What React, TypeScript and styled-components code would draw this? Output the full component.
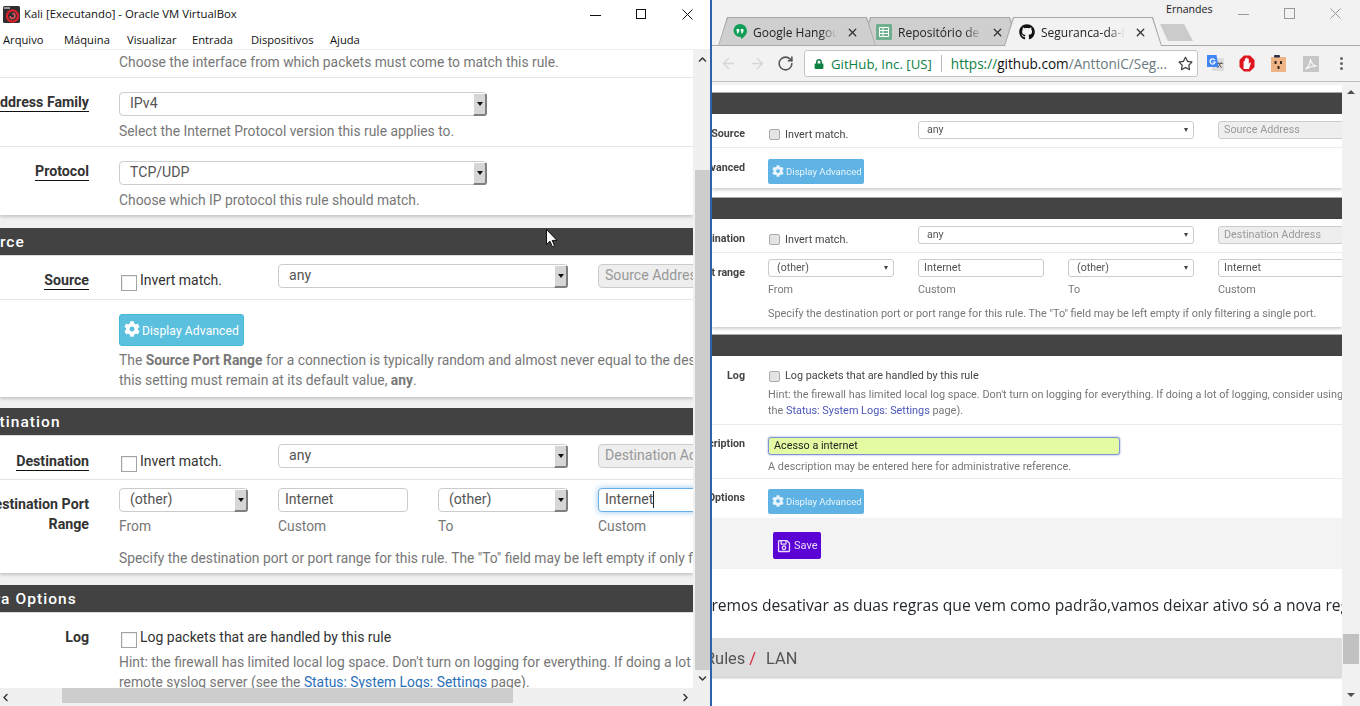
import React from 'react';
import styled, { createGlobalStyle } from 'styled-components';
import { FaCog, FaGithub, FaLock, FaRegSave, FaRegStar, FaChevronUp, FaChevronDown, FaChevronLeft, FaChevronRight } from 'react-icons/fa';
import { ArrowLeft, ArrowRight, RotateCw, X } from 'lucide-react';

const Global = createGlobalStyle`
  html, body { margin: 0; padding: 0; width: 1360px; height: 706px; overflow: hidden; background: #fff; }
  #root { width: 1360px; height: 706px; }
  * { box-sizing: border-box; }
`;

const Desktop = styled.div`
  display: flex; width: 1360px; height: 706px; overflow: hidden; position: relative;
  font-family: Roboto, "Liberation Sans", sans-serif;
`;
const Pointer = styled.svg`position: absolute; left: 546px; top: 229px; z-index: 9;`;

/* ---------- VirtualBox window ---------- */
const VBox = styled.div`
  width: 712px; height: 706px; display: flex; flex-direction: column;
  background: #f0f0f0; border-right: 2px solid #2b63ad; flex: none;
`;
const TitleBar = styled.div`
  height: 28px; flex: none; background: #fff; display: flex; align-items: center; padding-left: 3px;
  font: 11.35px "Open Sans", "Noto Sans", sans-serif; color: #111;
`;
const TitleText = styled.span`margin: 0 0 1px 4px; flex: 1; white-space: nowrap;`;
const WinControls = styled.div`display: flex; align-items: center; color: ${p => p.$color}; height: 100%;`;
const WinBtn = styled.div`
  width: ${p => p.$w}px; display: flex; justify-content: center; align-items: center;
`;
const MenuBar = styled.div`
  height: 22px; flex: none; background: #fff; display: flex; align-items: center; padding: 2px 0 0 3px;
  border-bottom: 1px solid #eee;
  font: 11.2px "Open Sans", "Noto Sans", sans-serif; color: #111;
`;
const MenuItem = styled.span`width: ${p => p.$w}px; flex: none; white-space: nowrap;`;
const VBody = styled.div`
  flex: 1; min-height: 0; display: grid; grid-template-columns: 693px 17px; grid-template-rows: 638px 18px;
`;
const Viewport = styled.div`overflow: hidden; background: #f0f0f0;`;

const Panel = styled.section`
  background: #fff; box-shadow: 0 2px 3px rgba(0,0,0,.18);
`;
const Bar = styled.h2`
  margin: ${p => p.$gap}px 0 0; height: 28px; background: #424242; border-bottom: 1px solid #ddd; color: #fff;
  font: 500 15.5px/28px Roboto, sans-serif; letter-spacing: 1.05px; white-space: nowrap;
  overflow: hidden; text-indent: ${p => p.$indent}px;
`;
const Row = styled.div`
  display: grid; grid-template-columns: 89px 1fr; column-gap: 30px;
  padding: ${p => p.$pt}px 0 ${p => p.$pb}px;
  border-bottom: ${p => (p.$noBorder ? '0' : '1px solid #e4e4e4')};
`;
const Label = styled.div`
  display: flex; justify-content: flex-end; text-align: right; white-space: nowrap;
  font-weight: 700; font-size: 14.2px; line-height: 20px; color: #333;
  margin-top: ${p => p.$mt || 0}px; margin-bottom: ${p => (p.$mt ? -12 : 0)}px;
`;
const Under = styled.span`border-bottom: 1px solid #111; height: 20px;`;
const Cell = styled.div`min-width: 0;`;
const Hint = styled.div`
  font-size: 13.85px; line-height: 20px; color: #777; white-space: nowrap; margin-top: ${p => p.$mt || 0}px;
  a { color: #2a70b8; }
`;
const Fields = styled.div`
  display: grid; grid-template-columns: 129px 130px 130px 140px; column-gap: 30px;
`;
const Select = styled.div`
  height: 24px; width: ${p => (p.$w ? `${p.$w}px` : 'auto')}; grid-column: span ${p => p.$span || 1};
  border: 1px solid #ccc; border-radius: 4px; background: #fff; position: relative;
  padding-left: 10px; font-size: 14.1px; line-height: 21.5px; color: #555;
`;
const SelectArrow = styled.span`
  position: absolute; right: -1px; top: 0; bottom: -1px; width: 14px;
  background: #d6d6d6; border: 1px solid #fff; border-right: 2px solid #808080; border-bottom: 2px solid #808080;
  border-radius: 0 3px 3px 0; display: flex; align-items: center; justify-content: center;
  &::after { content: ""; border: 3.5px solid transparent; border-top: 4px solid #111; border-bottom: 0; }
`;
const Input = styled.div`
  height: 24px; border: 1px solid ${p => (p.$focus ? '#66afe9' : '#ccc')}; border-radius: 4px;
  background: ${p => (p.$off ? '#eee' : '#fff')}; color: ${p => (p.$off ? '#999' : '#555')};
  padding-left: 6px; font-size: 14.1px; line-height: 21px; white-space: nowrap; overflow: hidden;
  box-shadow: ${p => (p.$focus ? '0 0 6px rgba(102,175,233,.7)' : 'none')};
`;
const Caret = styled.span`display: inline-block; width: 1px; height: 17px; background: #222; vertical-align: -4px;`;
const Check = styled.label`
  display: flex; align-items: flex-start; font-size: 14px; line-height: 20px; color: #333; white-space: nowrap;
  padding-left: 2px; margin-top: ${p => p.$mt || 0}px; margin-bottom: ${p => (p.$mt ? -12 : 0)}px;
  &::before {
    content: ""; width: 14px; height: 14px; margin: 5px 3px 0 0; flex: none; background: #fff;
    border: 1px solid #a4a4a4; box-shadow: inset 1px 1px 0 #ececec;
  }
`;
const InfoBtn = styled.button`
  display: flex; align-items: center; width: 125px; height: 32px; padding: 1px 0 0 4px; margin: 0;
  background: #5bc0de; border: 1px solid #46b8da; border-radius: 3px; color: #fff;
  font: 12.1px Roboto, sans-serif; letter-spacing: .1px; white-space: nowrap;
  svg { margin-right: 2px; margin-top: -4px; }
`;
const Sub = styled.div`font-size: 13.85px; line-height: 20px; color: #777; margin-top: 4px;`;
const VScroll = styled.div`
  background: #f0f0f0; display: flex; flex-direction: column; align-items: center; padding-left: 1px; padding-top: 5px; color: #333;
`;
const VThumb = styled.div`width: 15px; height: 500px; margin-top: 106px; background: #cdcdcd; flex: none;`;
const VDown = styled.div`margin-top: 4px; display: flex;`;
const HScroll = styled.div`
  grid-column: 1 / 3; background: #f0f0f0; display: flex; align-items: center; color: #333; padding-left: 1px; height: 18px;
`;
const HThumb = styled.div`width: 451px; height: 15px; margin: 0 168px 3px 52px; background: #cdcdcd;`;

const Select1 = ({ children, w, span }: any) => (
  <Select $w={w} $span={span}>{children}<SelectArrow /></Select>
);

const VBoxLogo = () => (
  <svg width="17" height="17" viewBox="0 0 17 17">
    <rect width="17" height="17" rx="1.5" fill="#2f2f33" />
    <circle cx="9.5" cy="10" r="5.6" fill="none" stroke="#d8232a" strokeWidth="2.4" />
    <path d="M9.5 7.6a2.4 2.4 0 1 1-2.4 2.4" fill="none" stroke="#e85a5f" strokeWidth="1.5" />
    <rect x="1" y="1" width="6" height="2" fill="#9a9a9a" />
  </svg>
);

const LeftWindow = () => (
  <VBox>
    <TitleBar>
      <VBoxLogo />
      <TitleText>Kali [Executando] - Oracle VM VirtualBox</TitleText>
      <WinControls $color="#111">
        <WinBtn $w={46}><svg width="11" height="11"><path d="M0 6.5h11" stroke="currentColor" /></svg></WinBtn>
        <WinBtn $w={46}><svg width="11" height="11"><rect x=".5" y=".5" width="9" height="9" fill="none" stroke="currentColor" /></svg></WinBtn>
        <WinBtn $w={46}><svg width="11" height="11"><path d="M.5.5l10 10M10.5.5l-10 10" stroke="currentColor" /></svg></WinBtn>
      </WinControls>
    </TitleBar>
    <MenuBar>
      <MenuItem $w={61}>Arquivo</MenuItem>
      <MenuItem $w={63}>Máquina</MenuItem>
      <MenuItem $w={65}>Visualizar</MenuItem>
      <MenuItem $w={59}>Entrada</MenuItem>
      <MenuItem $w={79}>Dispositivos</MenuItem>
      <MenuItem $w={40}>Ajuda</MenuItem>
    </MenuBar>
    <VBody>
      <Viewport>
        <Panel>
          <Row $pt={2} $pb={5}>
            <span />
            <Hint>Choose the interface from which packets must come to match this rule.</Hint>
          </Row>
          <Row $pt={14} $pb={5}>
            <Label><Under>Address Family</Under></Label>
            <Cell>
              <Select1 w={368}>IPv4</Select1>
              <Hint $mt={5}>Select the Internet Protocol version this rule applies to.</Hint>
            </Cell>
          </Row>
          <Row $pt={14} $pb={5} $noBorder>
            <Label><Under>Protocol</Under></Label>
            <Cell>
              <Select1 w={368}>TCP/UDP</Select1>
              <Hint $mt={5}>Choose which IP protocol this rule should match.</Hint>
            </Cell>
          </Row>
        </Panel>
        <Bar $gap={13} $indent={-30}>Source</Bar>
        <Panel>
          <Row $pt={8} $pb={11}>
            <Label $mt={6}><Under>Source</Under></Label>
            <Fields>
              <Check $mt={6}>Invert match.</Check>
              <Select1 span={2}>any</Select1>
              <Input $off>Source Address</Input>
            </Fields>
          </Row>
          <Row $pt={14} $pb={7} $noBorder>
            <span />
            <Cell>
              <InfoBtn><FaCog size={16} />Display Advanced</InfoBtn>
              <Hint $mt={4}>The <b>Source Port Range</b> for a connection is typically random and almost never equal to the destination port.</Hint>
              <Hint>this setting must remain at its default value, <b>any</b>.</Hint>
            </Cell>
          </Row>
        </Panel>
        <Bar $gap={11} $indent={-30}>Destination</Bar>
        <Panel>
          <Row $pt={8} $pb={11}>
            <Label $mt={7}><Under>Destination</Under></Label>
            <Fields>
              <Check $mt={7}>Invert match.</Check>
              <Select1 span={2}>any</Select1>
              <Input $off>Destination Address</Input>
            </Fields>
          </Row>
          <Row $pt={8} $pb={5} $noBorder>
            <Label $mt={6}>Destination Port<br />Range</Label>
            <Cell>
              <Fields>
                <div><Select1>(other)</Select1><Sub>From</Sub></div>
                <div><Input>Internet</Input><Sub>Custom</Sub></div>
                <div><Select1>(other)</Select1><Sub>To</Sub></div>
                <div><Input $focus>Internet<Caret /></Input><Sub>Custom</Sub></div>
              </Fields>
              <Hint $mt={12}>Specify the destination port or port range for this rule. The "To" field may be left empty if only filtering a single port.</Hint>
            </Cell>
          </Row>
        </Panel>
        <Bar $gap={12} $indent={-30}>Extra Options</Bar>
        <Panel>
          <Row $pt={14} $pb={5} $noBorder>
            <Label>Log</Label>
            <Cell>
              <Check>Log packets that are handled by this rule</Check>
              <Hint $mt={4}>Hint: the firewall has limited local log space. Don't turn on logging for everything. If doing a lot of logging, consider using a</Hint>
              <Hint>remote syslog server (see the <a>Status: System Logs: Settings</a> page).</Hint>
            </Cell>
          </Row>
        </Panel>
      </Viewport>
      <VScroll>
        <FaChevronUp size={9} />
        <VThumb />
        <VDown><FaChevronDown size={9} /></VDown>
      </VScroll>
      <HScroll>
        <FaChevronLeft size={9} />
        <HThumb />
        <FaChevronRight size={9} />
      </HScroll>
    </VBody>
  </VBox>
);

/* ---------- Chrome window ---------- */
const Chrome = styled.div`
  flex: 1; min-width: 0; height: 706px; display: flex; flex-direction: column; background: #f2f2f2; position: relative;
`;
const TabStrip = styled.div`
  height: 46px; flex: none; display: flex; align-items: flex-end; padding-left: 6px; border-bottom: 1px solid #a9a9a9; 
`;
const Tab = styled.div`
  position: relative; width: 158px; height: 29px; margin-left: ${p => (p.$first ? 0 : -15)}px; margin-bottom: -1px;
  z-index: ${p => p.$z}; display: flex; align-items: center; padding: 1px 0 0 15px; color: #222;
  background: #a9a9a9;
  clip-path: polygon(0 100%, 9px 0, calc(100% - 9px) 0, 100% 100%);
  font: 12px "Open Sans", "Noto Sans", sans-serif;
  &::before {
    content: ""; position: absolute; inset: 1px 1px ${p => (p.$active ? 0 : 1)}px 1px;
    background: ${p => (p.$active ? '#f2f2f2' : '#cfcfcf')};
    clip-path: polygon(0 100%, 9px 0, calc(100% - 9px) 0, 100% 100%);
  }
  & > * { position: relative; }
`;
const TabTitle = styled.span`
  width: 84px; margin-left: 6px; overflow: hidden; white-space: nowrap; flex: none;
  -webkit-mask-image: linear-gradient(to right, #000 80%, transparent);
  mask-image: linear-gradient(to right, #000 80%, transparent);
`;
const TabClose = styled.span`display: flex; margin-left: 9px; color: #333;`;
const NewTab = styled.div`
  width: 33px; height: 17px; margin: 0 0 4px -2px; background: #cbcbcb;
  clip-path: polygon(0 0, 24px 0, 100% 100%, 8px 100%);
`;
const UserName = styled.div`
  position: absolute; left: 454px; top: 1px; font: 10.6px/16px "Open Sans", "Noto Sans", sans-serif; color: #222;
  text-shadow: 0 0 2px #fff, 0 0 3px #fff, 0 0 3px #bbb;
`;
const ChromeControls = styled.div`
  margin-left: auto; align-self: flex-start; display: flex; height: 27px; color: #999; margin-right: 2px;
`;
const Toolbar = styled.div`
  height: 36px; flex: none; display: flex; align-items: center; padding-left: 8px; border-bottom: 1px solid #bdbdbd;
`;
const NavIcon = styled.span`width: ${p => p.$w}px; display: flex; color: ${p => p.$c}; flex: none;`;
const Omnibox = styled.div`
  width: 394px; height: 27px; background: #fff; border: 1px solid #c4c4c4; border-radius: 3px; flex: none;
  display: flex; align-items: center; padding-left: 9px; white-space: nowrap;
  font: 13.2px "Open Sans", "Noto Sans", sans-serif; color: #0b8043;
`;
const Sep = styled.span`width: 1px; height: 17px; background: #bbb; margin: 0 9px;`;
const Url = styled.span`font-size: 13.6px;`;
const UrlScheme = styled.span`color: #0b8043;`;
const UrlHost = styled.span`color: #111;`;
const UrlPath = styled.span`color: #6a7a80;`;
const Ext = styled.span`display: flex; width: 32px; justify-content: flex-start; flex: none;`;
const Dots = styled.span`
  display: flex; flex-direction: column; gap: 2px; margin-left: 5px;
  i { width: 3px; height: 3px; border-radius: 50%; background: #666; display: block; }
`;
const PageWrap = styled.div`
  flex: 1; min-height: 0; display: grid; grid-template-columns: 630px 18px; margin-top: 3px;
`;
const RPage = styled.div`
  overflow: hidden; background: #fff; filter: blur(.35px); min-height: 0; padding-top: 7px;
`;
const RPanel = styled.section`
  background: #fff; box-shadow: 0 2px 3px rgba(0,0,0,.2);
`;
const RBar = styled.div`
  height: ${p => p.$h}px; margin-top: ${p => p.$gap}px; background: #444; border-top: 1px solid #aaa; 
`;
const RRow = styled.div`
  display: grid; grid-template-columns: 33px 1fr; column-gap: 23px;
  padding: ${p => p.$pt}px 0 ${p => p.$pb}px;
  border-bottom: ${p => (p.$noBorder ? '0' : '1px solid #ebebeb')};
`;
const RLabel = styled.div`
  display: flex; justify-content: flex-end; white-space: nowrap; font-weight: 700; font-size: 10.7px; line-height: 14px;
  color: #444; margin-top: ${p => p.$mt || 0}px; margin-bottom: -10px;
`;
const RFields = styled.div`
  display: grid; grid-template-columns: repeat(4, 126px); column-gap: 24px;
`;
const RSelect = styled.div`
  height: 18px; grid-column: span ${p => p.$span || 1}; border: 1px solid #ccc; border-radius: 3px; background: #fff;
  position: relative; padding-left: 8px; font-size: 10.6px; line-height: 16px; color: #555;
  &::after {
    content: ""; position: absolute; right: 5px; top: 6px; border: 2.5px solid transparent; border-top: 4px solid #444; border-bottom: 0;
  }
`;
const RInput = styled.div`
  height: 18px; border: 1px solid ${p => (p.$hl ? '#7f95d8' : '#ccc')}; border-radius: 3px;
  background: ${p => (p.$hl ? '#e4fba4' : p.$off ? '#eee' : '#fff')}; color: ${p => (p.$hl ? '#222' : p.$off ? '#999' : '#555')};
  padding-left: 5px; font-size: 10.8px; line-height: ${p => (p.$off ? 15 : 16)}px; white-space: nowrap; overflow: hidden;
  width: ${p => (p.$w ? `${p.$w}px` : 'auto')};
  box-shadow: ${p => (p.$hl ? '0 0 2px #7f95d8' : 'none')};
`;
const RCheck = styled.label`
  display: flex; align-items: center; font-size: 10.8px; line-height: 16px; color: #444; white-space: nowrap;
  padding-left: 1px; margin-top: ${p => p.$mt || 0}px; margin-bottom: ${p => (p.$mt ? -6 : 0)}px;
  &::before {
    content: ""; width: 9px; height: 9px; margin-right: 5px; flex: none; background: #e4e4e4;
    border: 1px solid #aaa; border-radius: 2px;
  }
`;
const RHint = styled.div`
  font-size: 10.86px; line-height: 16px; color: #777; white-space: nowrap; margin-top: ${p => p.$mt || 0}px;
  a { color: #4a57b8; }
`;
const RSub = styled.div`font-size: 10.8px; line-height: 15px; color: #777; margin-top: 5px;`;
const RInfo = styled.button`
  display: flex; align-items: center; width: 96px; height: 25px; padding: 0 0 0 4px; margin: 0; border: 0; border-radius: 2px;
  background: #5eb3e4; color: #e8f5fc; font: 9.6px Roboto, sans-serif; white-space: nowrap;
  svg { margin-right: 2px; margin-top: -2px; }
`;
const SaveZone = styled.div`background: #f3f3f3; padding: 14px 0 10px 61px;`;
const SaveBtn = styled.button`
  display: flex; align-items: center; width: 48px; height: 27px; padding: 0 0 0 4px; margin: 0; border: 0; border-radius: 2px;
  background: #5b02d4; color: #e8dcfb; font: 11px Roboto, sans-serif;
  svg { margin-right: 3px; }
`;
const Para = styled.div`
  height: 69px; padding-top: 26px; overflow: hidden; white-space: nowrap; margin-left: -18px;
  font: 15.65px/20px "Open Sans", "Noto Sans", sans-serif; color: #24292e;
`;
const RuleBar = styled.div`
  height: 39px; background: #ddd; box-shadow: 0 1px 2px rgba(0,0,0,.25); white-space: nowrap; margin-left: -7px;
  font: 16.4px/41px Roboto, sans-serif; color: #555;
  em { color: #d9283a; font-style: normal; margin: 0 10px 0 4px; }
`;
const RScroll = styled.div`
  background: #f1f1f1; display: flex; flex-direction: column; align-items: center; padding-top: 5px; min-height: 0;
`;
const TriUp = styled.span`border: 4px solid transparent; border-bottom: 4px solid #505050; border-top: 0;`;
const TriDown = styled.span`border: 4px solid transparent; border-top: 4px solid #505050; border-bottom: 0; margin-top: 29px;`;
const RThumb = styled.div`width: 16px; height: 30px; margin-top: 540px; background: #c1c1c1; flex: none;`;

const HangoutsIcon = () => (
  <svg width="14" height="16" viewBox="0 0 14 16">
    <path d="M7 0a7 7 0 0 1 7 7c0 3.8-3.4 6.5-6 8v-2H7A6.5 6.5 0 0 1 7 0z" fill="#0f9d58" />
    <path d="M3.6 5h2.6v2.6L5 9.4H3.8l.8-1.8h-1zM7.8 5h2.6v2.6L9.2 9.4H8l.8-1.8h-1z" fill="#fff" />
  </svg>
);
const SheetsIcon = () => (
  <svg width="16" height="16" viewBox="0 0 16 16">
    <rect width="16" height="16" rx="1" fill="#6fb18f" />
    <path d="M3.5 3.5h9v9h-9zM3.5 6.5h9M3.5 9.5h9M7 3.5v9" fill="none" stroke="#fff" strokeWidth="1" />
  </svg>
);
const TranslateIcon = () => (
  <svg width="17" height="17" viewBox="0 0 17 17">
    <rect x="5" y="3" width="12" height="13" fill="#ddd" />
    <path d="M11 7l3.5 6M14.5 7l-4 6M10 8.5h6" stroke="#666" strokeWidth="1" fill="none" />
    <path d="M0 0h9.5l2 12H0z" fill="#4285f4" />
    <path d="M7.8 5a2.6 2.6 0 1 0 .4 2H5.8" fill="none" stroke="#fff" strokeWidth="1.2" />
  </svg>
);
const StopIcon = () => (
  <svg width="16" height="17" viewBox="0 0 16 17">
    <path d="M5 .5h6L15.5 5v7L11 16.5H5L.5 12V5z" fill="#e0141c" />
    <path d="M4.6 14V6.2a.8.8 0 0 1 1.3 0V3.8a.8.8 0 0 1 1.3 0V3a.8.8 0 0 1 1.3 0V4a.8.8 0 0 1 1.3 0v5l1-1.4c.7-.4 1.3 0 1 .6L10 14z" fill="#fff" />
  </svg>
);
const GhostIcon = () => (
  <svg width="15" height="17" viewBox="0 0 15 17">
    <rect y="2" width="15" height="15" fill="#eeb486" />
    <rect x="3" y="0" width="6" height="2.5" rx="1" fill="#27304a" />
    <rect x="3.5" y="6" width="2" height="3" fill="#33251c" />
    <rect x="9" y="6" width="2" height="3" fill="#33251c" />
    <rect x="6.5" y="11" width="2" height="3" fill="#33251c" />
  </svg>
);
const PdfIcon = () => (
  <svg width="16" height="16" viewBox="0 0 16 16">
    <rect width="16" height="16" fill="#c6c6c6" />
    <path d="M2.5 13c3-1.5 4.5-5 5-10 .3 3.5 2 6 6 7-3.5-.3-7 .8-11 3z" fill="none" stroke="#fff" strokeWidth="1.1" />
  </svg>
);

const RightWindow = () => (
  <Chrome>
    <UserName>Ernandes</UserName>
    <TabStrip>
      <Tab $first $z={3}><HangoutsIcon /><TabTitle>Google Hangouts</TabTitle><TabClose><X size={13} strokeWidth={2.4} /></TabClose></Tab>
      <Tab $z={2}><SheetsIcon /><TabTitle>Repositório de Trabalhos</TabTitle><TabClose><X size={13} strokeWidth={2.4} /></TabClose></Tab>
      <Tab $active $z={4}><FaGithub size={16} color="#111" /><TabTitle>Seguranca-da-Informacao</TabTitle><TabClose><X size={13} strokeWidth={2.4} /></TabClose></Tab>
      <NewTab />
      <ChromeControls>
        <WinBtn $w={46}><svg width="11" height="11"><path d="M0 6.5h11" stroke="currentColor" /></svg></WinBtn>
        <WinBtn $w={46}><svg width="11" height="11"><rect x=".5" y=".5" width="10" height="10" fill="none" stroke="currentColor" /></svg></WinBtn>
        <WinBtn $w={46}><svg width="11" height="11"><path d="M.5.5l10 10M10.5.5l-10 10" stroke="currentColor" /></svg></WinBtn>
      </ChromeControls>
    </TabStrip>
    <Toolbar>
      <NavIcon $w={29} $c="#d6d6d6"><ArrowLeft size={17} strokeWidth={2} /></NavIcon>
      <NavIcon $w={28} $c="#d6d6d6"><ArrowRight size={17} strokeWidth={2} /></NavIcon>
      <NavIcon $w={27} $c="#555"><RotateCw size={17} strokeWidth={2.2} /></NavIcon>
      <Omnibox>
        <FaLock size={10} color="#0b8043" style={{ marginRight: 7 }} />
        GitHub, Inc. [US]
        <Sep />
        <Url><UrlScheme>https://</UrlScheme><UrlHost>github.com</UrlHost><UrlPath>/AnttoniC/Seg...</UrlPath></Url>
        <NavIcon $w={16} $c="#444" style={{ marginLeft: 'auto', marginRight: 3 }}><FaRegStar size={15} /></NavIcon>
      </Omnibox>
      <Ext style={{ marginLeft: 9 }}><TranslateIcon /></Ext>
      <Ext><StopIcon /></Ext>
      <Ext><GhostIcon /></Ext>
      <Ext><PdfIcon /></Ext>
      <Dots><i /><i /><i /></Dots>
    </Toolbar>
    <PageWrap>
      <RPage>
        <RBar $h={22} $gap={0} />
        <RPanel>
          <RRow $pt={7} $pb={8}>
            <RLabel $mt={6}>Source</RLabel>
            <RFields>
              <RCheck $mt={3}>Invert match.</RCheck>
              <RSelect $span={2}>any</RSelect>
              <RInput $off $w={140}>Source Address</RInput>
            </RFields>
          </RRow>
          <RRow $pt={11} $pb={4} $noBorder>
            <RLabel $mt={2}>Advanced</RLabel>
            <div><RInfo><FaCog size={12} />Display Advanced</RInfo></div>
          </RRow>
        </RPanel>
        <RBar $h={22} $gap={9} />
        <RPanel>
          <RRow $pt={7} $pb={8}>
            <RLabel $mt={6}>Destination</RLabel>
            <RFields>
              <RCheck $mt={3}>Invert match.</RCheck>
              <RSelect $span={2}>any</RSelect>
              <RInput $off $w={140}>Destination Address</RInput>
            </RFields>
          </RRow>
          <RRow $pt={6} $pb={5} $noBorder>
            <RLabel $mt={7}>Port range</RLabel>
            <div>
              <RFields>
                <div><RSelect>(other)</RSelect><RSub>From</RSub></div>
                <div><RInput>Internet</RInput><RSub>Custom</RSub></div>
                <div><RSelect>(other)</RSelect><RSub>To</RSub></div>
                <div><RInput $w={140}>Internet</RInput><RSub>Custom</RSub></div>
              </RFields>
              <RHint $mt={9}>Specify the destination port or port range for this rule. The "To" field may be left empty if only filtering a single port.</RHint>
            </div>
          </RRow>
        </RPanel>
        <RBar $h={22} $gap={7} />
        <RPanel>
          <RRow $pt={12} $pb={5}>
            <RLabel $mt={1}>Log</RLabel>
            <div>
              <RCheck>Log packets that are handled by this rule</RCheck>
              <RHint $mt={3}>Hint: the firewall has limited local log space. Don't turn on logging for everything. If doing a lot of logging, consider using a</RHint>
              <RHint>the <a>Status: System Logs: Settings</a> page).</RHint>
            </div>
          </RRow>
          <RRow $pt={12} $pb={3}>
            <RLabel>Description</RLabel>
            <div>
              <RInput $hl $w={352}>Acesso a internet</RInput>
              <RHint $mt={4}>A description may be entered here for administrative reference.</RHint>
            </div>
          </RRow>
          <RRow $pt={10} $pb={4} $noBorder>
            <RLabel $mt={2}>Extra Options</RLabel>
            <div><RInfo><FaCog size={12} />Display Advanced</RInfo></div>
          </RRow>
        </RPanel>
        <SaveZone><SaveBtn><FaRegSave size={14} />Save</SaveBtn></SaveZone>
        <Para>Teremos desativar as duas regras que vem como padrão,vamos deixar ativo só a nova regra que criamos</Para>
        <RuleBar>Rules<em>/</em>LAN</RuleBar>
      </RPage>
      <RScroll>
        <TriUp />
        <RThumb />
        <TriDown />
      </RScroll>
    </PageWrap>
  </Chrome>
);

export default function App() {
  return (
    <>
      <Global />
      <Desktop>
        <LeftWindow />
        <RightWindow />
        <Pointer width="12" height="20" viewBox="0 0 12 20">
          <path d="M.5.5v15l3.5-3.3 2.3 5.5 2.2-1-2.3-5.3h4.8z" fill="#fff" stroke="#111" strokeWidth="1" />
        </Pointer>
      </Desktop>
    </>
  );
}
